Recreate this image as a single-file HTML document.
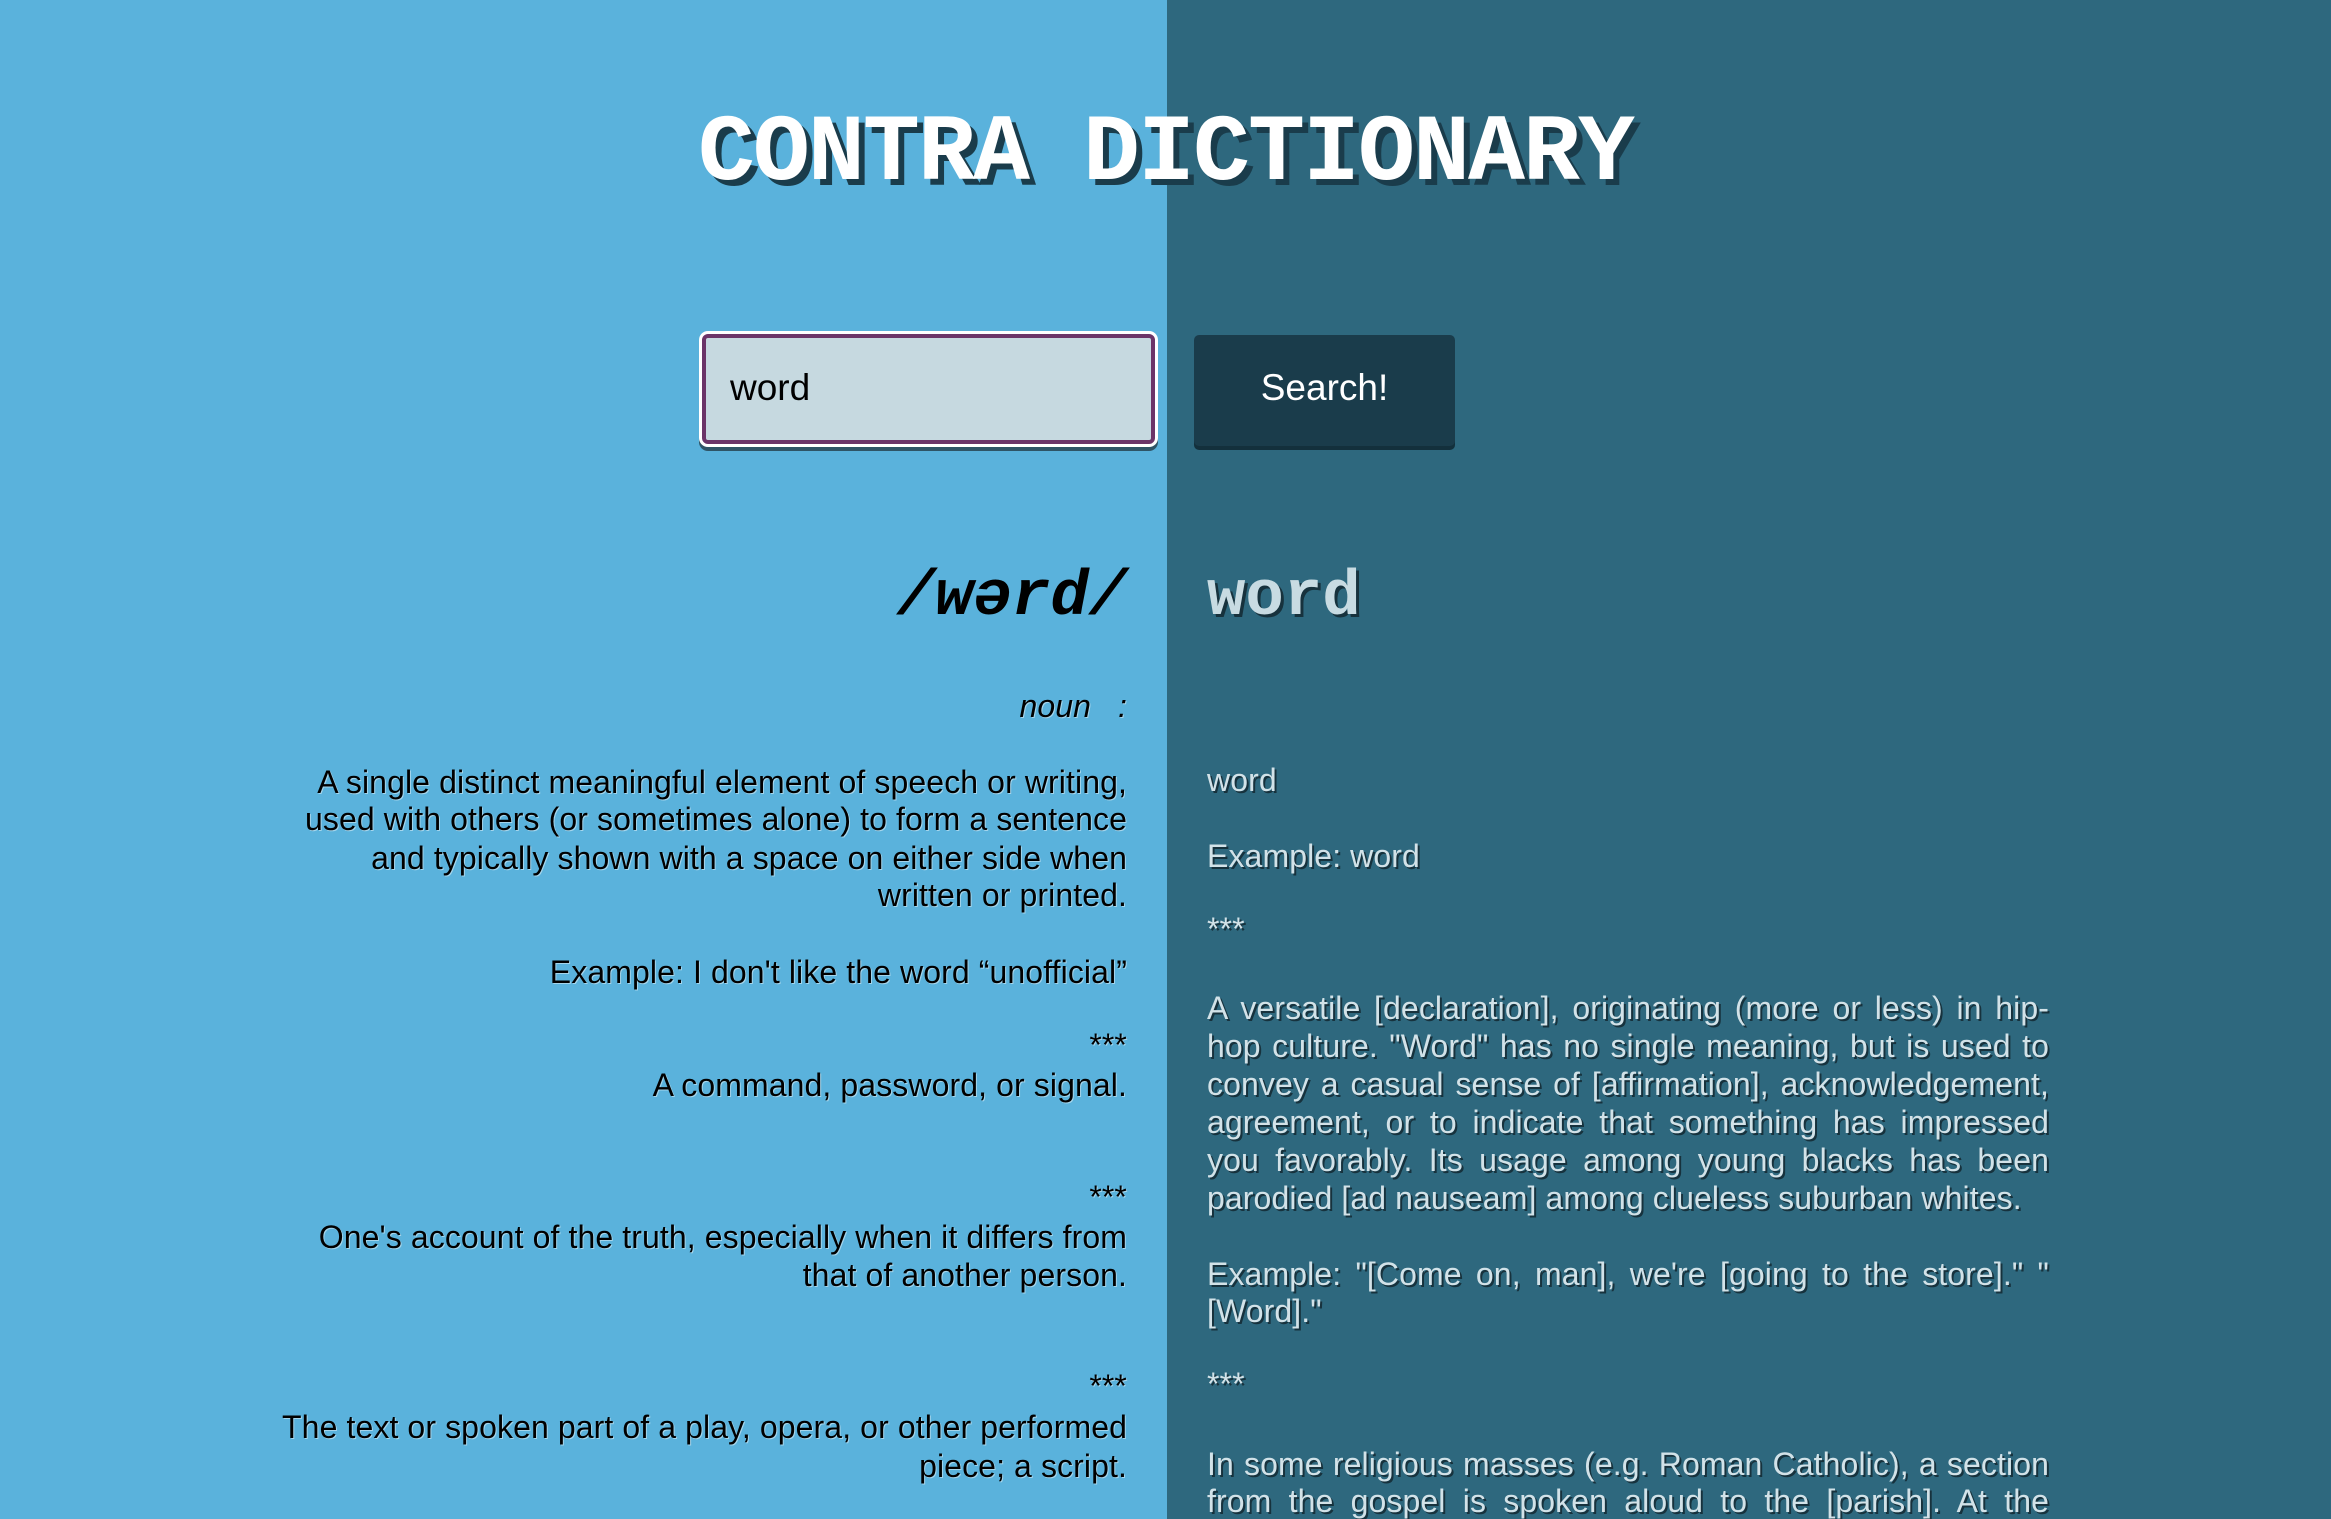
<!DOCTYPE html>
<html><head><meta charset="utf-8"><style>
*{margin:0;padding:0;box-sizing:border-box}
html,body{width:2331px;height:1519px;overflow:hidden}
body{position:relative;background:#5ab2dc;font-family:"Liberation Sans",sans-serif}
#r{position:absolute;left:1167px;top:0;width:1164px;height:1519px;background:#2e687e}
.t{position:absolute;left:0;width:2331px;top:100px;text-align:center;font-family:"Liberation Mono",monospace;font-weight:bold;font-size:95px;color:#fff;text-shadow:6px 6px 0 #1a3c4b;letter-spacing:-2px}
.inp{position:absolute;left:702px;top:334px;width:453px;height:110px;background:#c6d9e0;border:4px solid #6b3468;box-shadow:0 0 0 3px #fff, 0 4px 0 3px #2e5466;border-radius:6px;font-size:37px;padding-left:24px;line-height:100px;color:#000}
.btn{position:absolute;left:1194px;top:335px;width:261px;height:111px;background:#1a3c4b;border-radius:5px;box-shadow:0 4px 0 #13303c;color:#fff;font-size:37px;text-align:center;line-height:106px}
.L,.R{position:absolute;height:38px;line-height:38px;font-size:32px;white-space:nowrap;letter-spacing:0.1px}
.L{right:1204px;text-align:right;color:#000;text-shadow:1px 1px 0 rgba(255,255,255,.45)}
.R{left:1207px;width:842px;color:#d2e2e8;text-shadow:2px 2px 0 #17323d}
.j{text-align:justify;text-align-last:justify}
.ph{position:absolute;right:1204px;top:562px;font-family:"Liberation Mono",monospace;font-weight:bold;font-style:italic;font-size:64px;color:#000}
.wd{position:absolute;left:1207px;top:562px;font-family:"Liberation Mono",monospace;font-weight:bold;font-size:64px;color:#c8dbe2;text-shadow:3px 3px 0 #17323d}
</style></head><body>
<div id="r"></div>
<div class="t">CONTRA DICTIONARY</div>
<div class="inp">word</div>
<div class="btn">Search!</div>
<div class="ph">/wərd/</div>
<div class="wd">word</div>

<div class="L" style="top:687px;font-style:italic">noun &nbsp;&nbsp;:</div>
<div class="L" style="top:763px">A single distinct meaningful element of speech or writing,</div>
<div class="L" style="top:800px">used with others (or sometimes alone) to form a sentence</div>
<div class="L" style="top:839px">and typically shown with a space on either side when</div>
<div class="L" style="top:876px">written or printed.</div>
<div class="L" style="top:953px">Example: I don't like the word “unofficial”</div>
<div class="L" style="top:1026px">***</div>
<div class="L" style="top:1066px">A command, password, or signal.</div>
<div class="L" style="top:1178px">***</div>
<div class="L" style="top:1218px">One's account of the truth, especially when it differs from</div>
<div class="L" style="top:1256px">that of another person.</div>
<div class="L" style="top:1367px">***</div>
<div class="L" style="top:1408px">The text or spoken part of a play, opera, or other performed</div>
<div class="L" style="top:1447px">piece; a script.</div>

<div class="R" style="top:761px">word</div>
<div class="R" style="top:837px">Example: word</div>
<div class="R" style="top:910px">***</div>
<div class="R j" style="top:989px">A versatile [declaration], originating (more or less) in hip-</div>
<div class="R j" style="top:1027px">hop culture. "Word" has no single meaning, but is used to</div>
<div class="R j" style="top:1065px">convey a casual sense of [affirmation], acknowledgement,</div>
<div class="R j" style="top:1103px">agreement, or to indicate that something has impressed</div>
<div class="R j" style="top:1141px">you favorably. Its usage among young blacks has been</div>
<div class="R" style="top:1179px">parodied [ad nauseam] among clueless suburban whites.</div>
<div class="R j" style="top:1255px">Example: "[Come on, man], we're [going to the store]." "</div>
<div class="R" style="top:1292px">[Word]."</div>
<div class="R" style="top:1365px">***</div>
<div class="R j" style="top:1445px">In some religious masses (e.g. Roman Catholic), a section</div>
<div class="R j" style="top:1482px">from the gospel is spoken aloud to the [parish]. At the</div>
</body></html>
